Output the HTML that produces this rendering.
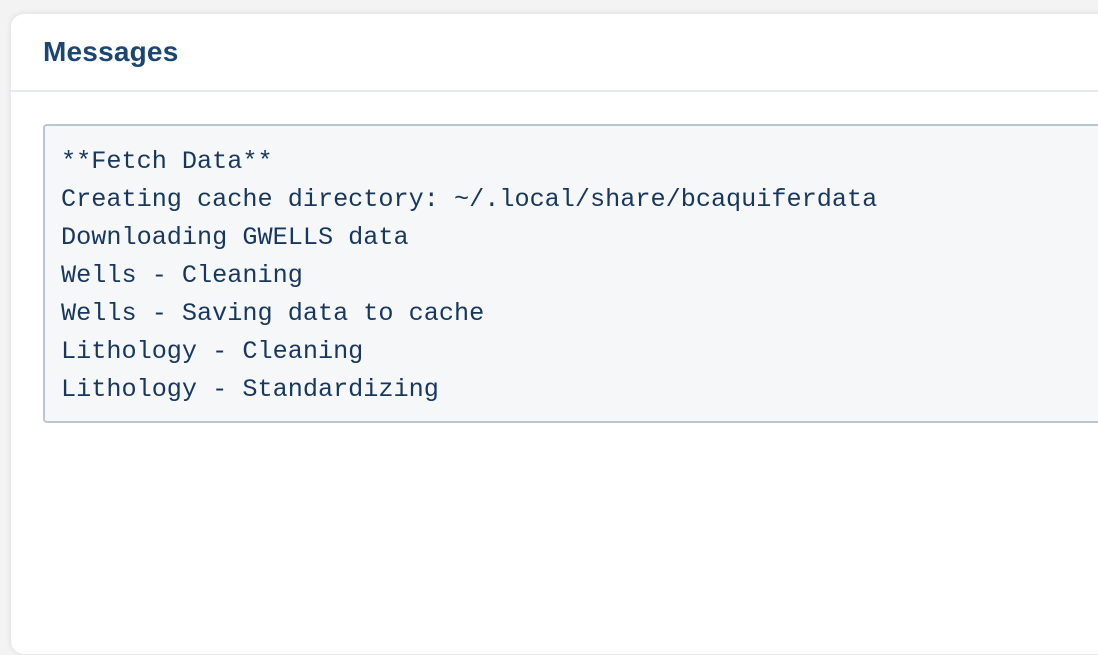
<!DOCTYPE html>
<html><head><style>
html,body{margin:0;padding:0;width:1098px;height:612px;overflow:hidden;background:#f3f3f3;}
.card{position:absolute;left:10px;top:13px;width:1120px;height:640px;background:#fff;border-radius:14px;box-shadow:0 0 6px rgba(0,0,0,0.08);border:1px solid #e6e8eb;}
.hdr{height:76px;border-bottom:2px solid #e6e9ee;}
.hdr h1{margin:0;position:absolute;left:32px;top:22px;font:600 28px "Liberation Sans",sans-serif;color:#1c4672;letter-spacing:0.2px;}
pre{position:absolute;left:32px;top:110px;width:1100px;height:299px;margin:0;box-sizing:border-box;background:#f5f7f9;border:2px solid #b9c5d3;border-radius:4px;padding:17px 0 0 16px;font:25.2px/38px "Liberation Mono",monospace;color:#17375e;}
</style></head><body>
<div class="card"><div class="hdr"><h1>Messages</h1></div>
<pre>**Fetch Data**
Creating cache directory: ~/.local/share/bcaquiferdata
Downloading GWELLS data
Wells - Cleaning
Wells - Saving data to cache
Lithology - Cleaning
Lithology - Standardizing</pre>
</div>
</body></html>
